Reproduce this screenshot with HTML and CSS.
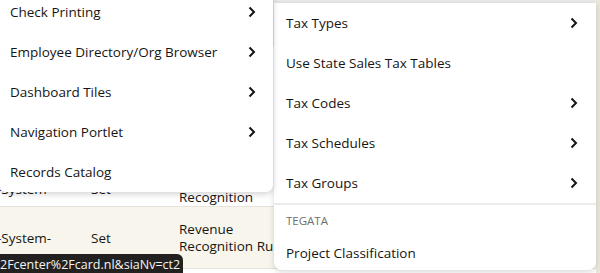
FILE: index.html
```html
<!DOCTYPE html>
<html>
<head>
    <meta charset="UTF-8">
    <meta name="viewport" content="width=device-width, initial-scale=1.0">
    <title>Menu</title>
    <link rel="stylesheet" href="styles.css">
</head>
<body>
    <div class="page">
        <div class="page-head"></div>
        <div class="rows">
            <div class="row row-first">
                <div class="cell c1">-System-</div>
                <div class="cell c2">Set</div>
                <div class="cell c3">Revenue<br>Recognition</div>
            </div>
            <div class="row row-hover">
                <div class="cell c1">-System-</div>
                <div class="cell c2">Set</div>
                <div class="cell c3">Revenue<br>Recognition Rule</div>
            </div>
        </div>
    </div>

    <ul class="menu menu-left">
        <li>Check Printing <span class="chev"><svg width="8" height="12" viewBox="0 0 8 12"><path d="M1.5 1.5l4.5 4.5-4.5 4.5"/></svg></span></li>
        <li>Employee Directory/Org Browser <span class="chev"><svg width="8" height="12" viewBox="0 0 8 12"><path d="M1.5 1.5l4.5 4.5-4.5 4.5"/></svg></span></li>
        <li>Dashboard Tiles <span class="chev"><svg width="8" height="12" viewBox="0 0 8 12"><path d="M1.5 1.5l4.5 4.5-4.5 4.5"/></svg></span></li>
        <li>Navigation Portlet <span class="chev"><svg width="8" height="12" viewBox="0 0 8 12"><path d="M1.5 1.5l4.5 4.5-4.5 4.5"/></svg></span></li>
        <li>Records Catalog</li>
    </ul>

    <ul class="menu menu-right">
        <li>Tax Types <span class="chev"><svg width="8" height="12" viewBox="0 0 8 12"><path d="M1.5 1.5l4.5 4.5-4.5 4.5"/></svg></span></li>
        <li>Use State Sales Tax Tables</li>
        <li>Tax Codes <span class="chev"><svg width="8" height="12" viewBox="0 0 8 12"><path d="M1.5 1.5l4.5 4.5-4.5 4.5"/></svg></span></li>
        <li>Tax Schedules <span class="chev"><svg width="8" height="12" viewBox="0 0 8 12"><path d="M1.5 1.5l4.5 4.5-4.5 4.5"/></svg></span></li>
        <li>Tax Groups <span class="chev"><svg width="8" height="12" viewBox="0 0 8 12"><path d="M1.5 1.5l4.5 4.5-4.5 4.5"/></svg></span></li>
        <li class="group">TEGATA</li>
        <li class="last">Project Classification</li>
    </ul>

    <div class="tooltip">2Fcenter%2Fcard.nl&amp;siaNv=ct2</div>
</body>
</html>
```

FILE: styles.css
```css
* {
    padding: 0;
    margin: 0;
    box-sizing: border-box;
}
body {
    width: 600px;
    height: 273px;
    overflow: hidden;
    background: #ece7db;
    font-family: "Open Sans", "Liberation Sans", sans-serif;
    font-size: 13.5px;
    color: #161513;
}
.page {
    width: 596px;
    height: 273px;
    background: #fff;
    overflow: hidden;
}
.page-head {
    height: 46px;
    background: #e9e9e9;
}
.rows {
    padding-top: 113px;
}
.row {
    display: flex;
    align-items: center;
    padding: 14px 0 13px;
    border-bottom: 1px solid #e6e3dc;
    line-height: 17px;
}
.row-first {
    padding: 13px 0 0;
}
.row-hover {
    background: #f8f5ec;
}
.cell.c1 {
    width: 94px;
    margin-left: -3px;
}
.cell.c2 {
    width: 88px;
}
.cell.c3 {
    white-space: nowrap;
}

.menu {
    position: absolute;
    list-style: none;
    background: #fff;
}
.menu li {
    display: flex;
    align-items: center;
    justify-content: space-between;
    height: 40px;
}
.chev {
    display: flex;
}
.chev svg path {
    fill: none;
    stroke: #161513;
    stroke-width: 2;
}
.menu-left {
    left: 0;
    top: -8px;
    width: 273px;
    padding: 0 17px 0 10px;
    border-radius: 0 0 7px 7px;
    box-shadow: 0 2px 6px rgba(0, 0, 0, 0.18);
    z-index: 2;
}
.menu-right {
    left: 274px;
    top: 3px;
    width: 322px;
    padding: 0;
    border-radius: 0 0 8px 8px;
    box-shadow: 0 2px 6px rgba(0, 0, 0, 0.16);
    z-index: 1;
}
.menu-right li {
    padding: 0 18px 0 12px;
}
.menu-right .group {
    height: 30px;
    padding-top: 2px;
    border-top: 2px solid #ecebea;
    font-size: 11.5px;
    color: #6f6e6b;
}
.menu-right .last {
    height: 37px;
    padding-top: 3px;
}
.tooltip {
    position: absolute;
    left: 0;
    top: 254px;
    width: 183px;
    height: 22px;
    padding-top: 2px;
    background: #222120;
    color: #f4f4f4;
    font-size: 12.5px;
    border-radius: 0 6px 0 0;
    white-space: nowrap;
    overflow: hidden;
    z-index: 3;
}
```
